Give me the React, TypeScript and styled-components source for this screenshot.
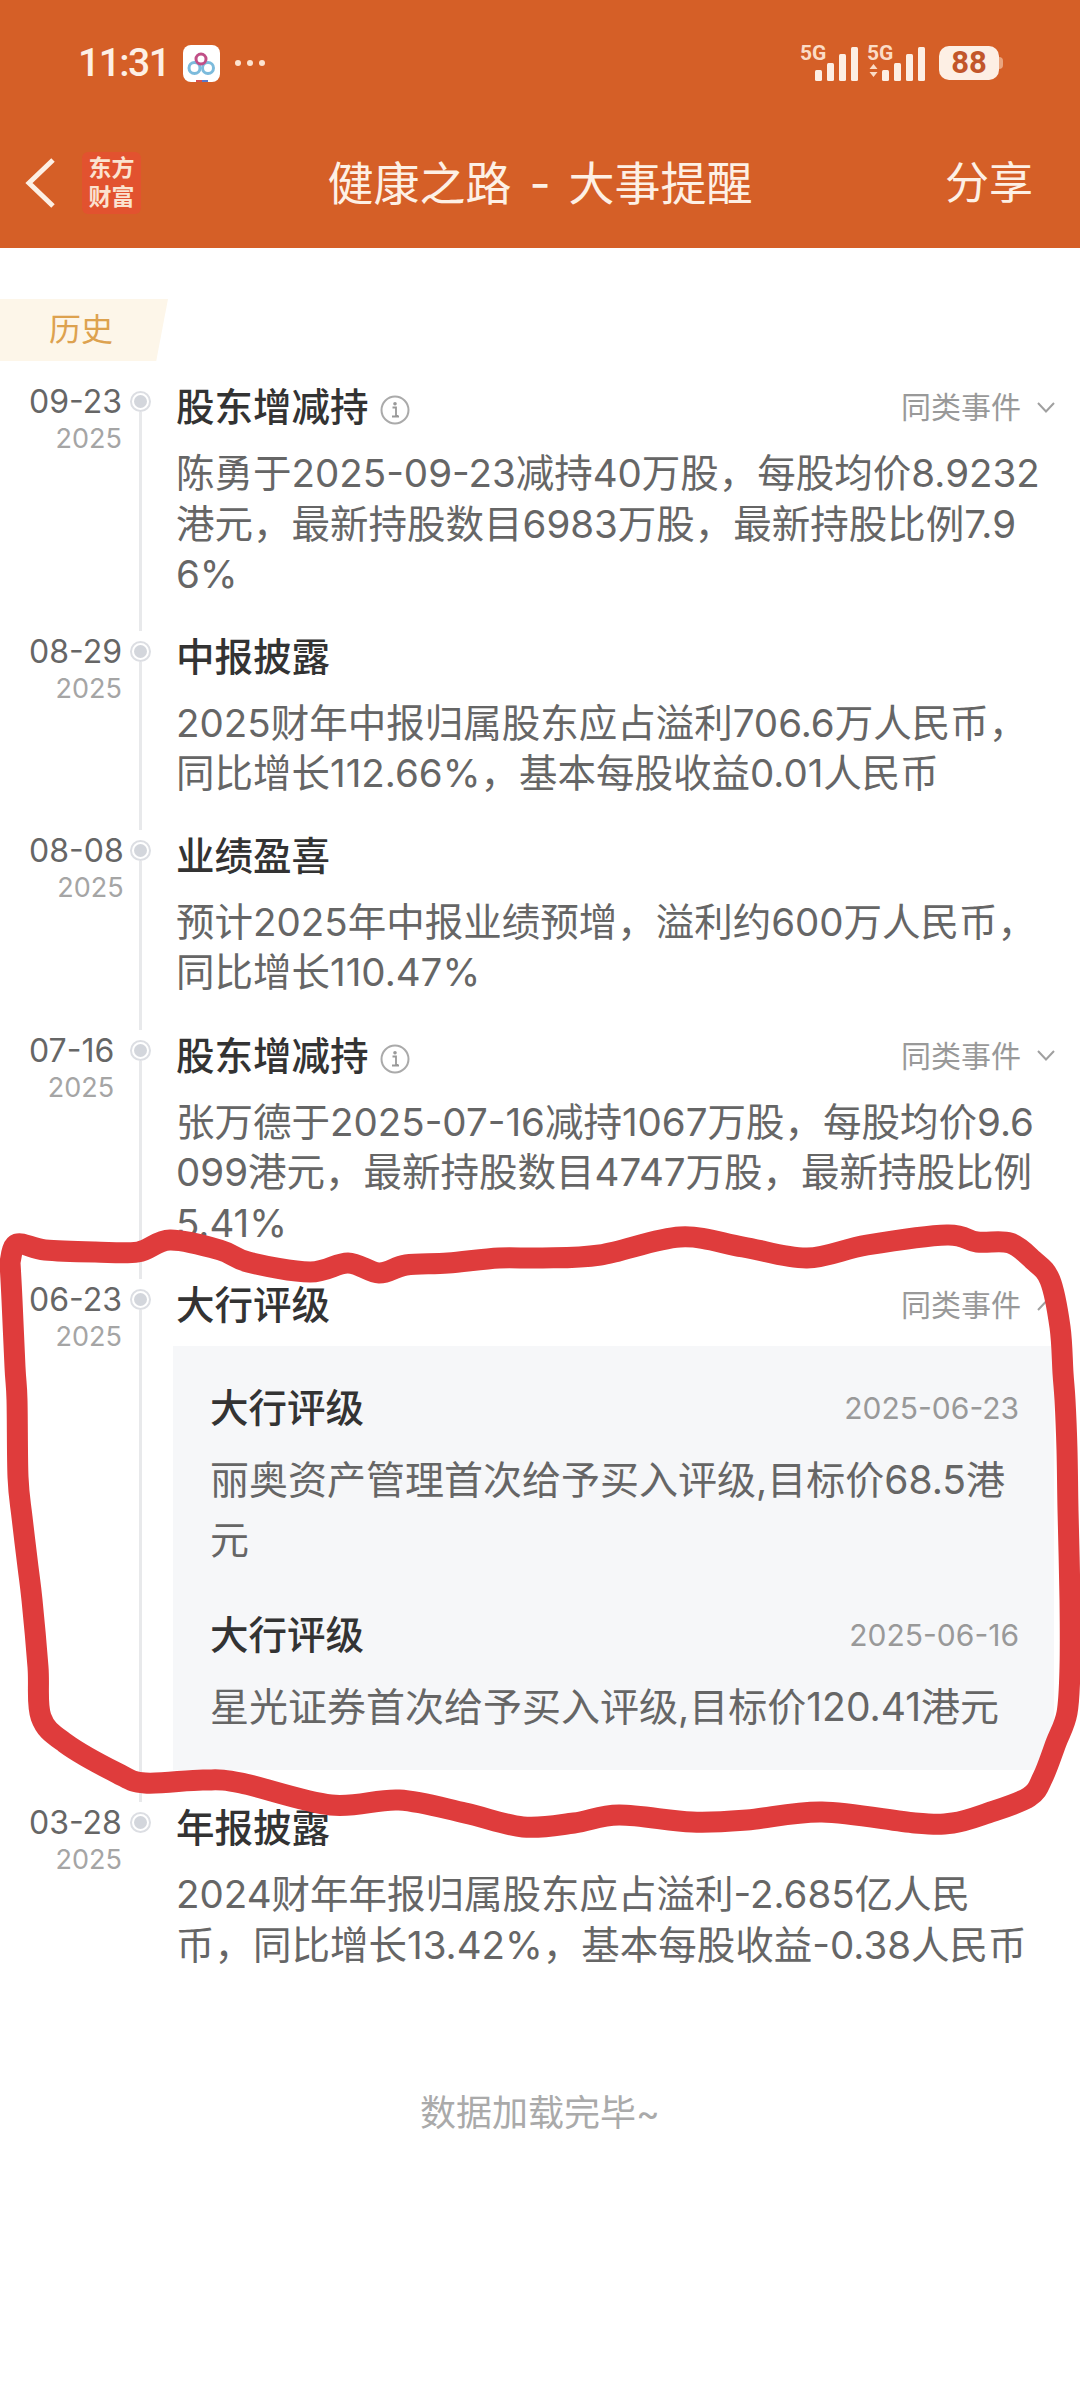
import React from "react";
import styled, { createGlobalStyle } from "styled-components";

const Global = createGlobalStyle`
  html, body { margin: 0; padding: 0; background: #fff; }
  body { font-family: "Inter", "Noto Sans CJK SC", "Noto Sans", sans-serif; }
`;

const Page = styled.div`
  position: relative;
  width: 1080px;
  min-height: 2400px;
  background: #fff;
  overflow: hidden;
`;

const Header = styled.header`
  background: #d55f27;
  height: 248px;
  display: flex;
  flex-direction: column;
  color: #fdf0e5;
`;

const StatusBar = styled.div`
  height: 126px;
  display: flex;
  align-items: center;
  justify-content: space-between;
  padding: 0 77px 0 78px;
  box-sizing: border-box;
`;

const StatusGroup = styled.div<{ $gap: number }>`
  display: flex;
  align-items: center;
  gap: ${(p) => p.$gap}px;
`;

const Time = styled.span`
  font-family: "Roboto", sans-serif;
  font-size: 39px;
  font-weight: 500;
  letter-spacing: -1.5px;
  line-height: 44px;
`;

const SignalMark = styled.svg`
  margin-top: -6px;
  flex: none;
`;

const Battery = styled.div`
  display: flex;
  align-items: center;
  margin-left: 5px;
`;

const BatteryBody = styled.div`
  width: 60px;
  height: 34px;
  border-radius: 10px;
  background: #fdefe4;
  color: #c2562a;
  font-family: "Roboto", sans-serif;
  font-weight: 700;
  font-size: 31px;
  line-height: 34px;
  text-align: center;
`;

const BatteryNub = styled.div`
  width: 4px;
  height: 12px;
  border-radius: 0 4px 4px 0;
  background: #e9a57f;
`;

const NavBar = styled.div`
  height: 122px;
  display: grid;
  grid-template-columns: 1fr auto 1fr;
  align-items: center;
  padding: 0 25px 8px 25px;
  box-sizing: border-box;
`;

const NavLeft = styled.div`
  display: flex;
  align-items: center;
  gap: 26px;
`;

const Logo = styled.div`
  width: 59px;
  height: 62px;
  border-radius: 6px;
  background: #e2522f;
  color: #fbe3d0;
  font-size: 23px;
  font-weight: 700;
  line-height: 29px;
  display: flex;
  flex-direction: column;
  align-items: center;
  justify-content: center;
`;

const NavTitle = styled.h1`
  margin: 0;
  font-size: 46px;
  font-weight: 400;
  line-height: 60px;
  white-space: nowrap;
`;

const NavDash = styled.span`
  margin: 0 18px;
`;

const Share = styled.div`
  justify-self: end;
  margin-right: 22px;
  font-size: 44px;
  line-height: 60px;
`;

const SectionTag = styled.div`
  margin-top: 51px;
  width: 168px;
  height: 62px;
  box-sizing: border-box;
  padding-left: 49px;
  background: #fdf6e9;
  clip-path: polygon(0 0, 100% 0, 93% 100%, 0 100%);
  color: #dda24f;
  font-size: 32px;
  line-height: 62px;
`;

const Timeline = styled.main`
  margin-top: 20px;
  display: flex;
  flex-direction: column;
`;

const Item = styled.article`
  display: flex;
`;

const DateCol = styled.div`
  width: 129px;
  box-sizing: border-box;
  padding-left: 29px;
  flex: none;
`;

const DateStack = styled.div`
  display: inline-flex;
  flex-direction: column;
  align-items: flex-end;
`;

const DateDay = styled.div`
  color: #666;
  font-size: 32px;
  line-height: 42px;
`;

const DateYear = styled.div`
  color: #a5a5a5;
  font-size: 27px;
  line-height: 36px;
  margin-top: -2px;
`;

const Rail = styled.div`
  width: 22px;
  flex: none;
  display: flex;
  flex-direction: column;
  align-items: center;
  padding-top: 10px;
`;

const Dot = styled.div`
  width: 21px;
  height: 21px;
  box-sizing: border-box;
  border-radius: 50%;
  border: 2px solid #dcdee3;
  background: #fff;
  display: flex;
  align-items: center;
  justify-content: center;
  flex: none;
  &::after {
    content: "";
    width: 13px;
    height: 13px;
    border-radius: 50%;
    background: #d3d6dc;
  }
`;

const RailLine = styled.div`
  flex: 1;
  width: 3px;
  background: #e8e9eb;
`;

const Content = styled.div<{ $pb: number }>`
  flex: 1;
  min-width: 0;
  margin-left: 25px;
  margin-right: 25px;
  padding-bottom: ${(p) => p.$pb}px;
`;

const TitleRow = styled.div`
  display: flex;
  align-items: center;
  height: 52px;
`;

const ItemTitle = styled.h2`
  margin: 0;
  font-size: 38.5px;
  font-weight: 500;
  line-height: 52px;
  color: #333;
`;

const InfoMark = styled.svg`
  margin-left: 11px;
  margin-top: 6px;
  flex: none;
`;

const Similar = styled.div`
  margin-left: auto;
  display: flex;
  align-items: center;
  gap: 16px;
  color: #999;
  font-size: 30px;
  line-height: 52px;
`;

const Body = styled.div`
  margin-top: 15px;
  color: #666;
  font-size: 38.5px;
  line-height: 50.5px;
`;

const BodyLine = styled.span`
  display: block;
  white-space: nowrap;
`;

const SubPanel = styled.div`
  margin: 15px 0 0 -3px;
  width: 881px;
  height: 424px;
  box-sizing: border-box;
  background: #f6f7f9;
  padding: 36px 35px 0 37px;
  display: flex;
  flex-direction: column;
`;

const SubItem = styled.div<{ $mt: number }>`
  margin-top: ${(p) => p.$mt}px;
`;

const SubHead = styled.div`
  display: flex;
  align-items: center;
  justify-content: space-between;
`;

const SubDate = styled.div`
  color: #999;
  font-size: 30px;
  line-height: 52px;
`;

const SubBody = styled(Body)`
  margin-top: 16px;
  font-size: 39px;
  line-height: 60px;
`;

const Footer = styled.div`
  padding-top: 85px;
  text-align: center;
  color: #aaa;
  font-size: 36px;
  line-height: 52px;
`;

const Annotation = styled.svg`
  position: absolute;
  left: 0;
  top: 0;
  pointer-events: none;
`;

const inkPoints: [number, number][] = [
  [10, 1262], [17, 1244], [45, 1250], [95, 1252], [138, 1252], [170, 1240], [220, 1250], [248, 1262],
  [310, 1272], [348, 1263], [379, 1273], [406, 1265], [448, 1263], [499, 1258], [540, 1258], [600, 1255],
  [680, 1237], [743, 1247], [807, 1258], [867, 1245], [947, 1235], [977, 1242], [1010, 1243], [1033, 1260],
  [1050, 1280], [1060, 1327], [1063, 1373], [1065, 1400], [1067, 1450], [1068, 1510], [1070, 1600],
  [1070, 1667], [1067, 1713], [1056, 1743], [1043, 1777], [1029, 1797], [988, 1813], [953, 1823], [915, 1823],
  [822, 1812], [747, 1820], [692, 1822], [619, 1815], [574, 1823], [523, 1827], [465, 1813], [399, 1800],
  [331, 1805], [241, 1783], [203, 1780], [145, 1783], [117, 1773], [65, 1743], [41, 1717], [38, 1667],
  [32, 1600], [28, 1567], [22, 1517], [18, 1477], [17, 1400], [15, 1367], [12, 1300], [10, 1262],
];

function smoothPath(pts: [number, number][]): string {
  let d = `M${pts[0][0]} ${pts[0][1]}`;
  for (let i = 0; i < pts.length - 1; i++) {
    const p0 = pts[Math.max(i - 1, 0)];
    const p1 = pts[i];
    const p2 = pts[i + 1];
    const p3 = pts[Math.min(i + 2, pts.length - 1)];
    const c1x = p1[0] + (p2[0] - p0[0]) / 6;
    const c1y = p1[1] + (p2[1] - p0[1]) / 6;
    const c2x = p2[0] - (p3[0] - p1[0]) / 6;
    const c2y = p2[1] - (p3[1] - p1[1]) / 6;
    d += ` C${c1x.toFixed(1)} ${c1y.toFixed(1)} ${c2x.toFixed(1)} ${c2y.toFixed(1)} ${p2[0]} ${p2[1]}`;
  }
  return d;
}

const AppGlyph = () => (
  <svg width="37" height="37" viewBox="0 0 37 37">
    <rect width="37" height="37" rx="8" fill="#fff" />
    <circle cx="11.5" cy="23" r="5.5" fill="none" stroke="#7cbbdc" strokeWidth="3" />
    <circle cx="25" cy="23" r="5.5" fill="none" stroke="#7cbbdc" strokeWidth="3" />
    <circle cx="18" cy="14" r="5" fill="none" stroke="#c04f87" strokeWidth="3" />
    <rect x="13" y="35" width="6" height="2" fill="#d8504f" />
    <rect x="19" y="35" width="6" height="2" fill="#5a78c8" />
  </svg>
);

const MoreDots = () => (
  <svg width="32" height="8" viewBox="0 0 32 8">
    <circle cx="4" cy="4" r="3" fill="#fde3d0" />
    <circle cx="16" cy="4" r="3" fill="#fde3d0" />
    <circle cx="28" cy="4" r="3" fill="#fde3d0" />
  </svg>
);

const Signal = ({ arrows }: { arrows?: boolean }) => (
  <SignalMark width="60" height="44" viewBox="0 -6 60 44">
    <text x="0" y="15.5" fontFamily="Roboto, sans-serif" fontSize="21" fontWeight="700" fill="#fbdcc6">5G</text>
    {arrows && <path d="M2.5 25l4-5 4 5zM2.5 28l4 5 4-5z" fill="#fbdcc6" />}
    <rect x="15" y="26" width="7" height="11" rx="1.5" fill="#fdefe4" />
    <rect x="27" y="19" width="7" height="18" rx="1.5" fill="#fdefe4" />
    <rect x="39" y="10" width="7" height="27" rx="1.5" fill="#fdefe4" />
    <rect x="51" y="3" width="7" height="34" rx="1.5" fill="#fdefe4" />
  </SignalMark>
);

const BackChevron = () => (
  <svg width="31" height="52" viewBox="0 0 31 52">
    <path d="M28 3L4 26l24 23" fill="none" stroke="#fdf0e5" strokeWidth="5" />
  </svg>
);

const InfoIcon = () => (
  <InfoMark width="30" height="30" viewBox="0 0 30 30">
    <circle cx="15" cy="15" r="13.5" fill="none" stroke="#aaa" strokeWidth="2" />
    <circle cx="15" cy="8.8" r="1.8" fill="#999" />
    <path d="M12.5 12.5H16V21h2M12 21.5h7" fill="none" stroke="#999" strokeWidth="1.8" />
  </InfoMark>
);

const Chevron = ({ up }: { up?: boolean }) => (
  <svg width="18" height="11" viewBox="0 0 18 11">
    <path d={up ? "M1 10l8-8.5 8 8.5" : "M1 1l8 8.5 8-8.5"} fill="none" stroke="#a0a0a0" strokeWidth="2" />
  </svg>
);

type Event = {
  day: string;
  title: string;
  lines?: string[];
  info?: boolean;
  similar?: "open" | "closed";
  pb: number;
  last?: boolean;
};

const events: Event[] = [
  {
    day: "09-23",
    title: "股东增减持",
    info: true,
    similar: "closed",
    pb: 31,
    lines: ["陈勇于2025-09-23减持40万股，每股均价8.9232", "港元，最新持股数目6983万股，最新持股比例7.9", "6%"],
  },
  {
    day: "08-29",
    title: "中报披露",
    pb: 31,
    lines: ["2025财年中报归属股东应占溢利706.6万人民币，", "同比增长112.66%，基本每股收益0.01人民币"],
  },
  {
    day: "08-08",
    title: "业绩盈喜",
    pb: 32,
    lines: ["预计2025年中报业绩预增，溢利约600万人民币，", "同比增长110.47%"],
  },
  {
    day: "07-16",
    title: "股东增减持",
    info: true,
    similar: "closed",
    pb: 31,
    lines: ["张万德于2025-07-16减持1067万股，每股均价9.6", "099港元，最新持股数目4747万股，最新持股比例", "5.41%"],
  },
  { day: "06-23", title: "大行评级", similar: "open", pb: 32 },
  {
    day: "03-28",
    title: "年报披露",
    pb: 32,
    last: true,
    lines: ["2024财年年报归属股东应占溢利-2.685亿人民", "币，同比增长13.42%，基本每股收益-0.38人民币"],
  },
];

const ratings = [
  { date: "2025-06-23", lines: ["丽奥资产管理首次给予买入评级,目标价68.5港", "元"], mt: 0 },
  { date: "2025-06-16", lines: ["星光证券首次给予买入评级,目标价120.41港元"], mt: 39 },
];

export default function App() {
  return (
    <Page>
      <Global />
      <Header>
        <StatusBar>
          <StatusGroup $gap={14}>
            <Time>11:31</Time>
            <AppGlyph />
            <MoreDots />
          </StatusGroup>
          <StatusGroup $gap={7}>
            <Signal />
            <Signal arrows />
            <Battery>
              <BatteryBody>88</BatteryBody>
              <BatteryNub />
            </Battery>
          </StatusGroup>
        </StatusBar>
        <NavBar>
          <NavLeft>
            <BackChevron />
            <Logo>
              <span>东方</span>
              <span>财富</span>
            </Logo>
          </NavLeft>
          <NavTitle>
            健康之路<NavDash>-</NavDash>大事提醒
          </NavTitle>
          <Share>分享</Share>
        </NavBar>
      </Header>
      <SectionTag>历史</SectionTag>
      <Timeline>
        {events.map((e) => (
          <Item key={e.day}>
            <DateCol>
              <DateStack>
                <DateDay>{e.day}</DateDay>
                <DateYear>2025</DateYear>
              </DateStack>
            </DateCol>
            <Rail>
              <Dot />
              {!e.last && <RailLine />}
            </Rail>
            <Content $pb={e.pb}>
              <TitleRow>
                <ItemTitle>{e.title}</ItemTitle>
                {e.info && <InfoIcon />}
                {e.similar && (
                  <Similar>
                    同类事件
                    <Chevron up={e.similar === "open"} />
                  </Similar>
                )}
              </TitleRow>
              {e.lines && (
                <Body>
                  {e.lines.map((l) => (
                    <BodyLine key={l}>{l}</BodyLine>
                  ))}
                </Body>
              )}
              {e.similar === "open" && (
                <SubPanel>
                  {ratings.map((r) => (
                    <SubItem key={r.date} $mt={r.mt}>
                      <SubHead>
                        <ItemTitle>大行评级</ItemTitle>
                        <SubDate>{r.date}</SubDate>
                      </SubHead>
                      <SubBody>
                        {r.lines.map((l) => (
                          <BodyLine key={l}>{l}</BodyLine>
                        ))}
                      </SubBody>
                    </SubItem>
                  ))}
                </SubPanel>
              )}
            </Content>
          </Item>
        ))}
      </Timeline>
      <Footer>数据加载完毕~</Footer>
      <Annotation width="1080" height="2400" viewBox="0 0 1080 2400">
        <path d={smoothPath(inkPoints)} fill="none" stroke="#df3c3c" strokeWidth="21" strokeLinecap="round" strokeLinejoin="round" />
      </Annotation>
    </Page>
  );
}
